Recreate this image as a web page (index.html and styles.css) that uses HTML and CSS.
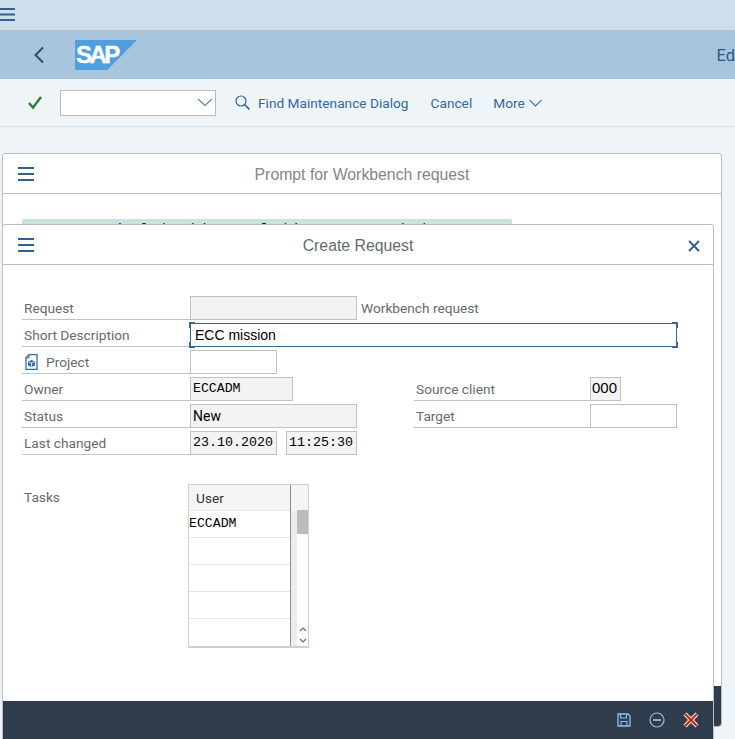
FILE: index.html
```html
<!DOCTYPE html>
<html lang="en">
<head>
<meta charset="utf-8">
<title>Create Request</title>
<link rel="stylesheet" href="styles.css">
</head>
<body>
<div class="topbar">
  <svg class="burger-top" width="15" height="13" viewBox="0 0 15 13"><path d="M0 1h15M0 6.500h15M0 12h15" stroke="#33618c" stroke-width="2"/></svg>
</div>
<header class="shell">
  <svg class="back" width="12" height="18" viewBox="0 0 12 18"><path d="M10 1.500 2.500 9l7.500 7.500" fill="none" stroke="#2f4b69" stroke-width="2"/></svg>
  <div class="logo">SAP</div>
  <div class="shell-title">Ed</div>
</header>
<nav class="toolbar">
  <svg class="check" width="16" height="15" viewBox="0 0 16 15"><path d="M2 8l4 4.500L14 2" fill="none" stroke="#2e7d32" stroke-width="2.400"/></svg>
  <div class="combo">
    <svg width="16" height="9" viewBox="0 0 16 9"><path d="M1 1l7 6.500L15 1" fill="none" stroke="#5a86ad" stroke-width="1.200"/></svg>
  </div>
  <svg class="search" width="15" height="15" viewBox="0 0 15 15"><circle cx="6" cy="6" r="5" fill="none" stroke="#2f6699" stroke-width="1.200"/><path d="M9.500 9.500 14.500 14.500" stroke="#2f6699" stroke-width="1.600"/></svg>
  <span class="tool find">Find Maintenance Dialog</span>
  <span class="tool cancel">Cancel</span>
  <span class="tool more">More</span>
  <svg class="more-chevron" width="13" height="8" viewBox="0 0 13 8"><path d="M.5 1l6 6 6-6" fill="none" stroke="#3f78ab" stroke-width="1.100"/></svg>
</nav>
<main class="desktop">
  <section class="dialog back-dialog">
    <div class="dialog-head">
      <svg class="burger" width="16" height="14" viewBox="0 0 16 14"><path d="M0 1h16M0 7h16M0 13h16" stroke="#33618c" stroke-width="2"/></svg>
      <h2 class="dialog-title muted">Prompt for Workbench request</h2>
    </div>
    <div class="highlight">You cannot include objects of this type attached to a request</div>
    <div class="back-foot"></div>
  </section>
  <section class="dialog front-dialog">
    <div class="dialog-head">
      <svg class="burger" width="16" height="14" viewBox="0 0 16 14"><path d="M0 1h16M0 7h16M0 13h16" stroke="#33618c" stroke-width="2"/></svg>
      <h2 class="dialog-title">Create Request</h2>
      <svg class="close" width="12" height="12" viewBox="0 0 12 12"><path d="M1 1l10 10M11 1 1 11" stroke="#33618c" stroke-width="2"/></svg>
    </div>
    <div class="form">
      <div class="row">
        <span class="label">Request</span>
        <span class="field ro w167"></span>
        <span class="after">Workbench request</span>
      </div>
      <div class="row">
        <span class="label">Short Description</span>
        <span class="focus">ECC mission<i class="corner tl"></i><i class="corner bl"></i><i class="corner tr"></i><i class="corner br"></i></span>
      </div>
      <div class="row">
        <span class="label">
          <svg class="obj" width="13" height="16" viewBox="0 0 13 16"><path d="M4 .700H12v14.600H1V3.700z" fill="#fff" stroke="#2f6fa8" stroke-width="1.300"/><path d="M4 1v3H1" fill="none" stroke="#2f6fa8"/><path d="M6.500 6 10 7.500v4L6.500 13 3 11.500v-4z" fill="#2f6fa8"/><path d="M3.500 7.800 6.500 9l3-1.200M6.500 9v3.500" fill="none" stroke="#fff" stroke-width=".8"/></svg>
          Project
        </span>
        <span class="field w87"></span>
      </div>
      <div class="row">
        <span class="label">Owner</span>
        <span class="field ro w103 mono-small">ECCADM</span>
        <span class="spacer s121"></span>
        <span class="label right-label">Source client</span>
        <span class="field ro w31 digits">000</span>
      </div>
      <div class="row">
        <span class="label">Status</span>
        <span class="field ro w167 plain">New</span>
        <span class="spacer s57"></span>
        <span class="label right-label">Target</span>
        <span class="field w87"></span>
      </div>
      <div class="row">
        <span class="label">Last changed</span>
        <span class="field ro w87 mono">23.10.2020</span>
        <span class="spacer s9"></span>
        <span class="field ro w71 mono">11:25:30</span>
      </div>
    </div>
    <div class="tasks">
      <span class="tasks-label">Tasks</span>
      <div class="table">
        <div class="table-main">
          <div class="th">User</div>
          <div class="td mono-small">ECCADM</div>
          <div class="td"></div>
          <div class="td"></div>
          <div class="td"></div>
          <div class="td"></div>
        </div>
        <div class="gutter"></div>
        <div class="scroll">
          <div class="scroll-head"></div>
          <div class="thumb"></div>
          <div class="arrows">
            <svg width="8" height="18" viewBox="0 0 8 18"><path d="M1 5l3-3 3 3M1 13l3 3 3-3" fill="none" stroke="#3f78ab" stroke-width="1.200"/></svg>
          </div>
        </div>
      </div>
    </div>
    <footer class="dialog-foot">
      <svg width="14" height="14" viewBox="0 0 14 14"><path d="M1 1h10l2 2v10H1z" fill="none" stroke="#8fc4ee" stroke-width="1.300"/><path d="M3.500 1v4h6V1M4 13V8.500h6V13" fill="none" stroke="#8fc4ee" stroke-width="1.100"/></svg>
      <svg width="16" height="16" viewBox="0 0 16 16"><circle cx="8" cy="8" r="7" fill="none" stroke="#8fc4ee" stroke-width="1.200"/><path d="M4 8h8" stroke="#d5e6f5" stroke-width="1.300"/></svg>
      <svg width="16" height="16" viewBox="0 0 16 16"><path d="M2 2l12 12M14 2 2 14" stroke="#fff" stroke-width="4"/><path d="M2 2l12 12M14 2 2 14" stroke="#cc2a12" stroke-width="2.400"/></svg>
    </footer>
  </section>
</main>
</body>
</html>
```
FILE: styles.css
```css
* { box-sizing: border-box; }
html, body { margin: 0; height: 739px; overflow: hidden; }
body {
  display: flex;
  flex-direction: column;
  background: #eff4f9;
  font-family: Roboto, "Noto Sans", sans-serif;
  font-size: 13.700px;
}
.topbar {
  height: 31px;
  flex: none;
  background: #cfdeec;
  border-bottom: 1px solid #bdbfc2;
}
.burger-top { display: block; margin-top: 8px; }
.shell {
  height: 48px;
  flex: none;
  display: flex;
  align-items: center;
  background: #a9c4dd;
}
.back { margin-left: 33px; }
.logo {
  margin-left: 30px;
  width: 62px;
  height: 30px;
  padding-left: 1px;
  background: #4f9fdf;
  clip-path: polygon(0 0, 100% 0, 52% 100%, 0 100%);
  color: #fff;
  font: bold 24px/30px "Liberation Sans", sans-serif;
  letter-spacing: -2.500px;
  -webkit-text-stroke: .4px #fff;
}
.shell-title {
  margin-left: auto;
  color: #2e5a85;
  font-size: 16.500px;
}
.toolbar {
  height: 48px;
  flex: none;
  display: flex;
  align-items: center;
  padding-left: 27px;
  border-bottom: 1px solid #d9e5f0;
  color: #34689b;
}
.combo {
  width: 156px;
  height: 26px;
  margin-left: 17px;
  padding-right: 2px;
  display: flex;
  align-items: center;
  justify-content: flex-end;
  background: #fff;
  border: 1px solid #b9bcbf;
}
.search { margin-left: 19px; }
.find { margin-left: 8px; }
.cancel { margin-left: 22px; }
.more { margin-left: 21px; }
.more-chevron { margin-left: 4px; }
.desktop { position: relative; flex: 1; }
.dialog {
  position: absolute;
  background: #fff;
  border: 1px solid #b9bdc4;
  border-radius: 3px 3px 0 0;
}
.back-dialog { left: 2px; top: 26px; width: 720px; height: 574px; border-radius: 3px; }
.front-dialog {
  left: 2px;
  top: 97px;
  width: 712px;
  height: 516px;
  display: flex;
  flex-direction: column;
}
.dialog-head {
  height: 40px;
  flex: none;
  position: relative;
  display: flex;
  align-items: center;
  justify-content: center;
  border-bottom: 1px solid #bbbdc2;
}
.burger { position: absolute; left: 15px; top: 13px; }
.close { position: absolute; right: 13px; top: 15px; }
.dialog-title {
  margin: 0;
  padding-top: 2px;
  font: 400 15.800px "Liberation Sans", sans-serif;
  color: #666a70;
}
.dialog-title.muted { color: #82868c; }
.highlight {
  margin: 25px 0 0 19px;
  width: 490px;
  height: 20px;
  padding: 1px 0 0 1px;
  background: #c9e2e0;
  border-radius: 2px;
  font: 14px/20px "Liberation Mono", monospace;
  color: #111;
  white-space: nowrap;
  overflow: hidden;
}
.back-foot {
  position: absolute;
  right: 0;
  bottom: 0;
  width: 8px;
  height: 40px;
  background: #2f3c4c;
  border-radius: 0 0 3px 0;
}
.form {
  padding: 31px 0 0 19px;
  display: flex;
  flex-direction: column;
  gap: 3px;
}
.row { display: flex; height: 24px; }
.label {
  width: 168px;
  flex: none;
  display: flex;
  align-items: center;
  gap: 8px;
  padding: 1px 0 0 2px;
  border-bottom: 1px solid #c2c2c2;
  color: #666a70;
  white-space: nowrap;
}
.right-label { width: 176px; }
.obj { margin-left: 1px; }
.field {
  flex: none;
  height: 24px;
  padding: 0 2px;
  border: 1px solid #c2c2c2;
  background: #fff;
  line-height: 21px;
  color: #000;
}
.ro { background: #f3f3f3; }
.w167 { width: 167px; }
.w103 { width: 103px; }
.w87 { width: 87px; }
.w71 { width: 71px; }
.w31 { width: 31px; }
.s121 { width: 121px; flex: none; }
.s57 { width: 57px; flex: none; }
.s9 { width: 9px; flex: none; }
.mono { font: 13.340px/21px "Liberation Mono", monospace; }
.mono-small { font: 13.200px/21px "Liberation Mono", monospace; }
.digits { padding: 0 1px; font: 15px/20px "Liberation Sans", sans-serif; }
.plain { font: 14px/23px Roboto, sans-serif; }
.after { margin-left: 4px; line-height: 25px; color: #666a70; }
.focus {
  position: relative;
  flex: none;
  width: 487px;
  height: 24px;
  padding-left: 4px;
  border: 1px solid #33699b;
  font: 14px/22px "Liberation Sans", sans-serif;
  color: #000;
}
.corner {
  position: absolute;
  width: 6px;
  height: 6px;
  border: 0 solid #33699b;
}
.tl { left: -2px; top: -2px; border-width: 1px 0 0 1px; }
.bl { left: -2px; bottom: -2px; border-width: 0 0 1px 1px; }
.tr { right: -2px; top: -2px; border-width: 1px 1px 0 0; }
.br { right: -2px; bottom: -2px; border-width: 0 1px 1px 0; }
.tasks {
  display: flex;
  padding: 29px 0 0 21px;
}
.tasks-label { width: 164px; flex: none; color: #666a70; line-height: 26px; }
.table {
  width: 121px;
  height: 164px;
  display: flex;
  border: 1px solid #cfcfcf;
  border-bottom-width: 2px;
}
.table-main { width: 102px; flex: none; border-right: 1px solid #8f8f8f; }
.th {
  height: 26px;
  padding-left: 7px;
  background: #f5f5f5;
  border-bottom: 1px solid #e6e6e6;
  color: #333;
  line-height: 26px;
}
.td {
  height: 27px;
  border-bottom: 1px solid #e6e6e6;
  line-height: 25px;
}
.td:last-child { border-bottom: 0; }
.gutter { width: 6px; flex: none; background: linear-gradient(#f5f5f5 26px, #ececec 26px); }
.scroll {
  flex: 1;
  position: relative;
  display: flex;
  flex-direction: column;
}
.scroll-head { height: 25px; background: #f5f5f5; }
.thumb { height: 24px; background: #bbb; }
.arrows { position: absolute; left: 2px; bottom: 2px; }
.arrows svg { display: block; }
.dialog-foot {
  margin-top: auto;
  height: 38px;
  flex: none;
  display: flex;
  align-items: center;
  justify-content: flex-end;
  gap: 18px;
  padding-right: 14px;
  background: #2f3c4c;
}
```
